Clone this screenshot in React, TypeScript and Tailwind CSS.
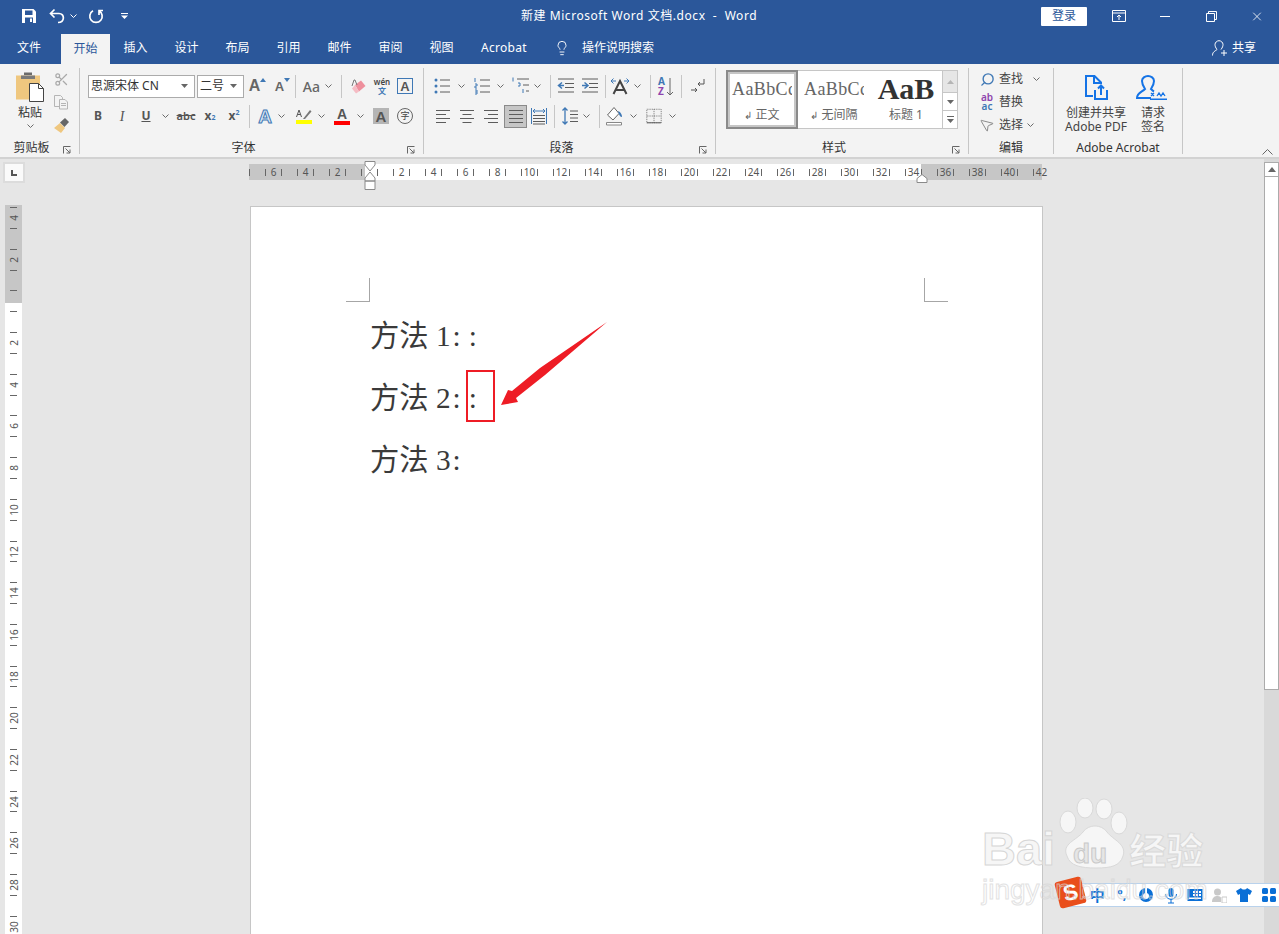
import type { ReactNode } from "react";
import { Lightbulb, MousePointer2, Scissors, Search, X } from "lucide-react";

const BLUE = "#3f78b5";
const GRAY = "#5c5c5c";

const TABS = ["插入", "设计", "布局", "引用", "邮件", "审阅", "视图"];
const H_CELLS = Array.from({ length: 50 }, (_, i) => (i % 2 === 1 && i !== 7 ? Math.abs(i - 7) : null));
const V_CELLS = Array.from({ length: 35 }, (_, i) => (i % 2 === 0 && i !== 4 ? Math.abs(i - 4) : null));

function Chevron({ color = "#6a6a6a" }: { color?: string }) {
  return (
    <svg width="7" height="4" viewBox="0 0 7 4" fill="none">
      <path d="M0.5 0.5 3.5 3.5 6.5 0.5" stroke={color} />
    </svg>
  );
}

function Cell({ className, children }: { className: string; children?: ReactNode }) {
  return <div className={`flex shrink-0 items-center justify-center ${className}`}>{children}</div>;
}

function Sep({ className }: { className?: string }) {
  return <div className={`h-[23px] w-px shrink-0 bg-[#c6c6c6] ${className ?? ""}`} />;
}

function Launcher() {
  return (
    <svg width="8" height="8" viewBox="0 0 8 8" fill="none" stroke="#666">
      <path d="M0.5 7.5V0.5H7.5M2.5 2.5 7 7M7 3.5V7H3.5" />
    </svg>
  );
}

function Group({ className, label, launcher, children }: { className: string; label: string; launcher?: boolean; children: ReactNode }) {
  return (
    <section className={`flex h-[86px] shrink-0 flex-col border-r border-[#c6c6c6] ${className}`}>
      <div className="h-[72px]">{children}</div>
      <div className="flex h-[14px] items-center text-[12px] text-[#333]">
        <span className="mt-[2px] flex-1 text-center leading-[14px]">{label}</span>
        {launcher && (
          <span className="mt-[5px] flex w-[16px] justify-start">
            <Launcher />
          </span>
        )}
      </div>
    </section>
  );
}

function Lines({ ys, x1 = 2, x2 = 18, color = GRAY }: { ys: number[]; x1?: number; x2?: number; color?: string }) {
  return (
    <>
      {ys.map((y, i) => (
        <path key={i} d={`M${x1} ${y}H${x2}`} stroke={color} />
      ))}
    </>
  );
}

function Icon({ children, size = 20 }: { children: ReactNode; size?: number }) {
  return (
    <svg width={size} height={size} viewBox="0 0 20 20" fill="none">
      {children}
    </svg>
  );
}

function AlignIcon({ kind }: { kind: "left" | "center" | "right" | "full" }) {
  const short = {
    left: "M3 8.5H13M3 16.5H13",
    center: "M5.5 8.5H14.5M5.5 16.5H14.5",
    right: "M7 8.5H17M7 16.500H17",
    full: "M3 8.5H17M3 16.5H17",
  }[kind];
  return (
    <Icon>
      <path d="M3 4.5H17M3 12.5H17" stroke={GRAY} />
      <path d={short} stroke={GRAY} />
    </Icon>
  );
}

function LetterA({ size = 17, color = "#555" }: { size?: number; color?: string }) {
  return (
    <span className="font-['Liberation_Sans',sans-serif] font-bold leading-none" style={{ fontSize: size, color }}>
      A
    </span>
  );
}

function ClipboardGroup() {
  return (
    <Group className="w-[80px]" label="剪贴板" launcher>
      <div className="flex">
        <div className="ml-[10px] flex w-[40px] flex-col items-center pt-[4px]">
          <svg width="30" height="30" viewBox="0 0 30 30">
            <path d="M1 3.5h24v24H1z" fill="#efc77f" />
            <path d="M9 3h8V0.5h-8z" fill="#6b6b6b" />
            <path d="M6 3.5h14V7H6z" fill="#7a7a7a" />
            <path d="M14.5 11.5h9l5 5v13h-14z" fill="#fff" stroke="#444" />
            <path d="M23.5 11.5v5h5" fill="none" stroke="#444" />
          </svg>
          <span className="mt-[4px] h-[14px] text-[12px] leading-[14px] text-[#333]">粘贴</span>
          <span className="mt-[4px] flex">
            <Chevron />
          </span>
        </div>
        <div className="flex w-[22px] flex-col gap-[3px] pt-px">
          <Cell className="h-[20px]">
            <Scissors size={15} color="#a9a9a9" />
          </Cell>
          <Cell className="h-[20px]">
            <svg width="16" height="16" viewBox="0 0 16 16" fill="#f3f3f3" stroke="#b5b5b5">
              <path d="M1.5 1.5h6l2 2v9h-8z" />
              <path d="M6.5 5.5h5.5l2.5 2.5v7h-8z" />
              <path d="M8 9.5h5M8 11.5h5" />
            </svg>
          </Cell>
          <Cell className="h-[20px]">
            <svg width="17" height="17" viewBox="0 0 17 17">
              <path d="M1 11 7 6l5 5-4 5z" fill="#efc77f" />
              <path d="M7 5.5 12 1l4 4-4.5 5z" fill="#666" />
            </svg>
          </Cell>
        </div>
      </div>
    </Group>
  );
}

function FontGroup() {
  return (
    <Group className="w-[344px]" label="字体" launcher>
      <div className="box-content flex h-[24px] items-center pl-[8px] pt-[6px]">
        <div className="flex h-[23px] w-[107px] shrink-0 items-center justify-between border border-[#ababab] bg-white pl-[2px] pr-[6px] text-[12px] text-[#333]">
          <span>思源宋体 CN</span>
          <svg width="7" height="4" viewBox="0 0 7 4">
            <path d="M0 0h7L3.500 4z" fill="#666" />
          </svg>
        </div>
        <div className="ml-[2px] flex h-[23px] w-[47px] shrink-0 items-center justify-between border border-[#ababab] bg-white pl-[2px] pr-[6px] text-[12px] text-[#333]">
          <span>二号</span>
          <svg width="7" height="4" viewBox="0 0 7 4">
            <path d="M0 0h7L3.500 4z" fill="#666" />
          </svg>
        </div>
        <Cell className="ml-[1px] w-[25px]">
          <LetterA size={16} color="#666" />
          <svg className="-mt-[12px]" width="6" height="4" viewBox="0 0 6 4">
            <path d="M0 4 3 0l3 4z" fill={BLUE} />
          </svg>
        </Cell>
        <Cell className="w-[25px]">
          <LetterA size={13} color="#666" />
          <svg className="-mt-[12px]" width="6" height="4" viewBox="0 0 6 4">
            <path d="M0 0h6L3 4z" fill={BLUE} />
          </svg>
        </Cell>
        <Sep />
        <Cell className="w-[24px] justify-end text-[14px] font-medium text-[#666]">Aa</Cell>
        <Cell className="w-[16px]">
          <Chevron />
        </Cell>
        <Sep className="ml-[5px]" />
        <Cell className="w-[32px]">
          <svg width="16" height="17" viewBox="0 0 16 17">
            <path d="M5 7 11 2.500 15.500 8 9 13.500z" fill="#ee8f9c" />
            <path d="M2 10.500 5 7l4 6.500-3 2z" fill="#f5bcc4" />
            <path d="M2 8 4 2h1l2 5" fill="none" stroke="#777" />
          </svg>
        </Cell>
        <Cell className="w-[16px] flex-col text-[8px] leading-[9px] text-[#444]">
          <span className="font-semibold">wén</span>
          <span className="font-bold text-[#3f78b5]">文</span>
        </Cell>
        <Cell className="ml-[3px] w-[24px]">
          <span className="flex h-[16px] w-[16px] items-center justify-center border border-[#3f78b5]">
            <LetterA size={13} />
          </span>
        </Cell>
      </div>
      <div className="mt-[6px] flex h-[24px] items-center pl-[8px] text-[#555]">
        <Cell className="w-[20px] text-[12px] font-bold">B</Cell>
        <Cell className="w-[28px] font-['Liberation_Serif',serif] text-[14px] italic">I</Cell>
        <Cell className="w-[20px] text-[12px] font-bold underline">U</Cell>
        <Cell className="w-[18px]">
          <Chevron />
        </Cell>
        <Cell className="w-[24px] text-[11px] font-semibold line-through">abc</Cell>
        <Cell className="w-[24px] text-[12px] font-bold">
          x<sub className="text-[7px] text-[#3f78b5]">2</sub>
        </Cell>
        <Cell className="w-[24px] text-[12px] font-bold">
          x<sup className="text-[7px] text-[#3f78b5]">2</sup>
        </Cell>
        <Sep className="ml-[3px]" />
        <Cell className="ml-[3px] w-[24px]">
          <span className="font-['Liberation_Sans',sans-serif] text-[19px] font-bold leading-none text-[#dbe7f4] [-webkit-text-stroke:1px_#3f78b5]">A</span>
        </Cell>
        <Cell className="w-[8px]">
          <Chevron />
        </Cell>
        <Cell className="ml-[7px] w-[24px] flex-col">
          <svg width="16" height="12" viewBox="0 0 16 12">
            <path d="M7 11 14 2l1.500 1.500L9 11z" fill="#777" />
            <path d="M0.500 9 3 2l2.500 7M1.500 6.500h3" fill="none" stroke="#555" />
          </svg>
          <span className="h-[4px] w-[16px] bg-[#ffff00]" />
        </Cell>
        <Cell className="w-[10px]">
          <Chevron />
        </Cell>
        <Cell className="ml-[4px] w-[24px] flex-col">
          <LetterA size={14} />
          <span className="h-[4px] w-[16px] bg-[#ff0000]" />
        </Cell>
        <Cell className="w-[12px]">
          <Chevron />
        </Cell>
        <Cell className="ml-[3px] w-[24px]">
          <span className="flex h-[16px] w-[16px] items-center justify-center bg-[#b5b5b5]">
            <LetterA size={15} />
          </span>
        </Cell>
        <Cell className="w-[24px]">
          <span className="flex h-[16px] w-[16px] items-center justify-center rounded-full border border-[#666] text-[9px] text-[#444]">字</span>
        </Cell>
      </div>
    </Group>
  );
}

function ParagraphGroup() {
  return (
    <Group className="w-[292px]" label="段落" launcher>
      <div className="box-content flex h-[24px] items-center pt-[6px]">
        <Cell className="ml-[6px] w-[24px]">
          <Icon>
            <circle cx="4" cy="4" r="1.500" fill={BLUE} />
            <circle cx="4" cy="10" r="1.500" fill={BLUE} />
            <circle cx="4" cy="16" r="1.500" fill={BLUE} />
            <Lines ys={[4, 10, 16]} x1={8} />
          </Icon>
        </Cell>
        <Cell className="w-[14px]">
          <Chevron />
        </Cell>
        <Cell className="ml-[2px] w-[24px]">
          <Icon>
            <path d="M3 2v4M3 8h2v2H3v2h2M3 14h2v4H3M3 16h2" stroke={BLUE} />
            <Lines ys={[4, 10, 16]} x1={8} />
          </Icon>
        </Cell>
        <Cell className="w-[12px]">
          <Chevron />
        </Cell>
        <Cell className="ml-[3px] w-[24px]">
          <Icon>
            <path d="M2 1.500v4M7 7h2v3H7M12 13v4" stroke={BLUE} />
            <Lines ys={[3]} x1={6} />
            <Lines ys={[9]} x1={12} />
            <Lines ys={[15]} x1={15} />
          </Icon>
        </Cell>
        <Cell className="w-[8px]">
          <Chevron />
        </Cell>
        <Sep className="ml-[9px]" />
        <Cell className="ml-[3px] w-[24px]">
          <Icon>
            <Lines ys={[3, 16]} x1={2} />
            <Lines ys={[7.500, 11.500]} x1={9} />
            <path d="M8 9.500H3M6 6.500 2.500 9.500 6 12.500" stroke={BLUE} strokeWidth="1.500" />
          </Icon>
        </Cell>
        <Cell className="w-[24px]">
          <Icon>
            <Lines ys={[3, 16]} x1={2} />
            <Lines ys={[7.500, 11.500]} x1={9} />
            <path d="M2 9.500H7M4.500 6.500 8 9.500 4.500 12.500" stroke={BLUE} strokeWidth="1.500" />
          </Icon>
        </Cell>
        <Sep className="ml-[3px]" />
        <Cell className="ml-[2px] w-[24px]">
          <Icon>
            <path d="M3.500 18 10 5l6.500 13M6 14h8" stroke="#444" strokeWidth="2" />
            <path d="M1 5h5M3.500 2.500 1 5l2.500 2.500M14 5h5M16.500 2.500 19 5l-2.500 2.500" stroke={BLUE} />
          </Icon>
        </Cell>
        <Cell className="w-[10px]">
          <Chevron />
        </Cell>
        <Sep className="ml-[8px]" />
        <Cell className="ml-[3px] w-[24px] gap-[1px]">
          <span className="flex flex-col text-[10px] font-bold leading-[10px]">
            <span className="text-[#3f78b5]">A</span>
            <span className="text-[#8e44ad]">Z</span>
          </span>
          <svg width="8" height="19" viewBox="0 0 8 19" fill="none" stroke="#666">
            <path d="M4 1v17M1 15l3 3 3-3" />
          </svg>
        </Cell>
        <Sep className="ml-[3px]" />
        <Cell className="ml-[3px] w-[24px]">
          <Icon>
            <path d="M17 3v5h-6M13 6l-2 2 2 2" stroke="#555" />
            <path d="M4 14h6M8 12l2 2-2 2" stroke="#555" />
          </Icon>
        </Cell>
      </div>
      <div className="mt-[6px] flex h-[24px] items-center">
        <Cell className="ml-[7px] w-[24px]">
          <AlignIcon kind="left" />
        </Cell>
        <Cell className="w-[24px]">
          <AlignIcon kind="center" />
        </Cell>
        <Cell className="w-[24px]">
          <AlignIcon kind="right" />
        </Cell>
        <Cell className="ml-[1px] h-[23px] w-[23px] border border-[#8a8a8a] bg-[#c6c6c6]">
          <AlignIcon kind="full" />
        </Cell>
        <Cell className="w-[24px]">
          <Icon>
            <path d="M2.500 2v16M17.500 2v16" stroke={BLUE} />
            <path d="M4 5h12M6 3l-2 2 2 2M14 3l2 2-2 2" stroke={BLUE} />
            <Lines ys={[9.500, 12.500, 15.500, 18]} x1={4} x2={16} />
          </Icon>
        </Cell>
        <Sep className="ml-[3px]" />
        <Cell className="ml-[3px] w-[24px]">
          <Icon>
            <path d="M5 2v16M2.500 4.500 5 2l2.500 2.500M2.500 15.500 5 18l2.500-2.500" stroke={BLUE} strokeWidth="1.300" />
            <Lines ys={[5, 8.500, 12, 15.500]} x1={10} />
          </Icon>
        </Cell>
        <Cell className="w-[8px]">
          <Chevron />
        </Cell>
        <Sep className="ml-[9px]" />
        <Cell className="ml-[3px] w-[24px]">
          <Icon>
            <path d="M9 1.500 2.500 9l5.500 5 6-6.500z" fill="#fff" stroke="#666" />
            <path d="M13 5c3 1 4 4 4 6-2 0-3-2-4-6z" fill={BLUE} />
            <path d="M1.500 16.500h15v2.500h-15z" fill="#fff" stroke="#888" />
          </Icon>
        </Cell>
        <Cell className="w-[12px]">
          <Chevron />
        </Cell>
        <Cell className="ml-[3px] w-[24px]">
          <Icon size={18}>
            <path d="M2 2.500h16v15H2zM10 2.500v15M2 10h16" stroke="#666" strokeDasharray="1 1" />
            <path d="M2 17.500h16" stroke="#555" />
          </Icon>
        </Cell>
        <Cell className="w-[12px]">
          <Chevron />
        </Cell>
      </div>
    </Group>
  );
}

function StyleCard({ className, sample, caption, arrow }: { className: string; sample: ReactNode; caption: string; arrow?: boolean }) {
  return (
    <div className={`flex h-full w-[72px] shrink-0 flex-col items-center overflow-hidden ${className}`}>
      <div className="flex h-[36px] w-full items-center justify-center overflow-hidden whitespace-nowrap font-['Liberation_Serif',serif]">{sample}</div>
      <div className="text-[12px] leading-[16px] text-[#666]">
        {arrow && <span className="mr-[3px] text-[10px]">↲</span>}
        {caption}
      </div>
    </div>
  );
}

function StylesGroup() {
  return (
    <Group className="w-[253px]" label="样式" launcher>
      <div className="pl-[10px] pt-[2px]">
        <div className="flex h-[59px] w-[232px] border border-[#c6c6c6] bg-white">
          <div className="-my-px -ml-px h-[59px] w-[72px] shrink-0 border-2 border-[#8a8a8a]">
            <div className="h-full border-2 border-[#c6c6c6]">
              <div className="-mx-[4px] -mt-[3px]">
                <StyleCard className="w-[68px]" arrow caption="正文" sample={<span className="w-[60px] overflow-hidden text-[18px] tracking-[0.4px] text-[#666]">AaBbCc</span>} />
              </div>
            </div>
          </div>
          <StyleCard className="" arrow caption="无间隔" sample={<span className="w-[60px] overflow-hidden text-[18px] tracking-[0.4px] text-[#666]">AaBbCc</span>} />
          <StyleCard className="" caption="标题 1" sample={<span className="text-[30px] font-bold leading-none text-[#333]">AaB</span>} />
          <div className="ml-auto flex w-[15px] flex-col border-l border-[#c6c6c6]">
            <Cell className="h-[21px] bg-[#e6e6e6]">
              <svg width="7" height="4" viewBox="0 0 7 4">
                <path d="M0 4h7L3.500 0z" fill="#b5b5b5" />
              </svg>
            </Cell>
            <Cell className="h-[19px] border-y border-[#c6c6c6]">
              <svg width="7" height="4" viewBox="0 0 7 4">
                <path d="M0 0h7L3.500 4z" fill="#666" />
              </svg>
            </Cell>
            <Cell className="flex-1 flex-col gap-[2px]">
              <span className="h-px w-[7px] bg-[#666]" />
              <svg width="7" height="4" viewBox="0 0 7 4">
                <path d="M0 0h7L3.500 4z" fill="#666" />
              </svg>
            </Cell>
          </div>
        </div>
      </div>
    </Group>
  );
}

function EditingGroup() {
  return (
    <Group className="w-[85px]" label="编辑">
      <div className="flex flex-col gap-[3px] pl-[9px] pt-px text-[12px] text-[#444]">
        <div className="flex h-[20px] items-center">
          <Cell className="w-[18px]">
            <Search size={15} color={BLUE} strokeWidth={2.2} className="-scale-x-100" />
          </Cell>
          <span className="ml-[3px]">查找</span>
          <span className="ml-[10px] flex">
            <Chevron />
          </span>
        </div>
        <div className="flex h-[20px] items-center">
          <Cell className="w-[18px] flex-col text-[10px] font-semibold leading-[9px]">
            <span className="text-[#8e44ad]">ab</span>
            <span className="text-[#3f78b5]">ac</span>
          </Cell>
          <span className="ml-[3px]">替换</span>
        </div>
        <div className="flex h-[20px] items-center">
          <Cell className="w-[18px]">
            <MousePointer2 size={16} color="#777" strokeWidth={1.2} className="-rotate-[8deg]" />
          </Cell>
          <span className="ml-[3px]">选择</span>
          <span className="ml-[4px] flex">
            <Chevron />
          </span>
        </div>
      </div>
    </Group>
  );
}

function AcrobatGroup() {
  return (
    <Group className="w-[129px]" label="Adobe Acrobat">
      <div className="flex text-[12px] leading-[14px] text-[#444]">
        <div className="flex w-[84px] flex-col items-center pt-[7px] text-center">
          <svg width="24" height="25" viewBox="0 0 24 25" fill="none" stroke="#1473e6" strokeWidth="2">
            <path d="M9 21H2V1h8.500L17 7.500V9M10 1v7h7" />
            <path d="M11 15v9h12v-9M17 20v-9M14 13.500l3-3 3 3" />
          </svg>
          <span className="mt-[6px]">创建并共享</span>
          <span>Adobe PDF</span>
        </div>
        <div className="flex w-[30px] flex-col items-center pt-[7px] text-center">
          <svg className="-ml-[2px]" width="32" height="25" viewBox="0 0 32 25" fill="none" stroke="#1473e6" strokeWidth="2">
            <path d="M15 23H1c0-5 5-6 8-9-2-3-3-5-3-8 0-3 3-5 6-5s6 2 6 5c0 3-1 5-3 8 1 1 2 2 3 2.500" />
            <path d="M14 24.500H31" />
            <path d="M15 18l3 3M18 18l-3 3M21 21l2-3 2 3 2-3 2 3" strokeWidth="1.300" />
          </svg>
          <span className="mt-[6px]">请求</span>
          <span>签名</span>
        </div>
      </div>
    </Group>
  );
}

function TitleBar() {
  return (
    <header className="flex h-[32px] items-center text-white">
      <div className="flex h-full w-[521px] shrink-0 items-center pl-[21px]">
        <svg width="16" height="16" viewBox="0 0 16 16">
          <path d="M1 1h11.500L15 3.500V15H1z" fill="#fff" />
          <path d="M4 2.500h7.500v4.500H4z" fill="#2b579a" />
          <path d="M4 9.500h8V15H4z" fill="#2b579a" />
          <path d="M9 10.500h2V14H9z" fill="#fff" />
        </svg>
        <svg className="ml-[12px]" width="16" height="16" viewBox="0 0 16 16" fill="none" stroke="#fff" strokeWidth="1.700">
          <path d="M5.500 1.500 1.500 5.500l4 4M1.500 5.500H10c6 0 6 9-1 9" />
        </svg>
        <span className="ml-[5px] flex">
          <Chevron color="#fff" />
        </span>
        <svg className="ml-[11px]" width="16" height="16" viewBox="0 0 16 16" fill="none" stroke="#fff" strokeWidth="1.700">
          <path d="M5 2.800A6.200 6.200 0 1 0 11 2.800M11 7V2.500h4" />
        </svg>
        <svg className="ml-[17px]" width="7" height="6" viewBox="0 0 7 6" fill="#fff">
          <path d="M0 0h7v1H0zM0 2.500h7L3.500 6z" />
        </svg>
      </div>
      <div className="-mt-px whitespace-nowrap text-[12px] tracking-[0.55px]">新建 Microsoft Word 文档.docx&nbsp; -&nbsp; Word</div>
      <div className="ml-auto flex h-full items-center">
        <div className="flex h-[19px] w-[46px] items-center justify-center rounded-[1px] bg-white text-[12px] text-[#2b579a]">登录</div>
        <Cell className="ml-[25px] w-[14px]">
          <svg width="14" height="12" viewBox="0 0 14 12" fill="none" stroke="#fff">
            <path d="M0.500 0.500h13v11H0.500zM0.500 3h13M7 10V5M5 7l2-2 2 2" />
          </svg>
        </Cell>
        <Cell className="ml-[32px] w-[14px]">
          <span className="h-px w-[10px] bg-white" />
        </Cell>
        <Cell className="ml-[32px] w-[14px]">
          <svg width="11" height="11" viewBox="0 0 11 11" fill="none" stroke="#fff">
            <path d="M0.500 2.500h8v8h-8zM2.500 2.500v-2h8v8h-2" />
          </svg>
        </Cell>
        <Cell className="ml-[32px] mr-[15px] w-[14px]">
          <X size={17} color="#fff" strokeWidth={1.4} />
        </Cell>
      </div>
    </header>
  );
}

function TabRow() {
  return (
    <nav className="flex h-[32px] items-stretch text-[12px] text-white">
      <Cell className="ml-[4px] w-[50px]">文件</Cell>
      <Cell className="ml-[7px] mt-[2px] w-[49px] bg-[#f3f3f3] text-[#2b579a]">开始</Cell>
      {TABS.map((tab) => (
        <Cell key={tab} className="w-[51px]">
          {tab}
        </Cell>
      ))}
      <Cell className="w-[74px] text-[12px] tracking-[0.3px]">Acrobat</Cell>
      <Cell className="ml-[13px] w-[16px]">
        <Lightbulb size={18} color="#fff" strokeWidth={1.4} />
      </Cell>
      <Cell className="ml-[12px]">操作说明搜索</Cell>
      <div className="ml-auto flex items-center pr-[23px]">
        <svg width="16" height="16" viewBox="0 0 16 16" fill="none" stroke="#fff">
          <path d="M0.500 15.500c0-4 3-4.500 4.500-6-1.500-2-2-3.500-2-5 0-2 2-3.800 4-3.800s4 1.800 4 3.800c0 1.500-.5 3-2 5M12 10v6M9 13h6" />
        </svg>
        <span className="ml-[4px]">共享</span>
      </div>
    </nav>
  );
}

function HRuler() {
  return (
    <div className="relative mt-[5px] flex h-[16px] w-[793px] bg-[linear-gradient(90deg,#c6c6c6_116px,#fff_116px,#fff_672px,#c6c6c6_672px)] text-[10px] text-[#555]">
      {H_CELLS.map((label, i) => (
        <div key={i} className="flex w-[16px] shrink-0 items-center">
          <span className="h-[7px] w-px shrink-0 bg-[#666]" />
          <span className="flex-1 text-center leading-none">{label}</span>
        </div>
      ))}
      <svg className="absolute left-[115px] -top-[3px]" width="12" height="29" viewBox="0 0 12 29" fill="#fff" stroke="#8a8a8a">
        <path d="M1 .5h10V4L6 10 1 4zM6 11l5 6v3H1v-3zM1 20h10v8.500H1z" />
      </svg>
      <svg className="absolute left-[667px] top-[10px]" width="12" height="9" viewBox="0 0 12 9" fill="#fff" stroke="#8a8a8a">
        <path d="M1 8.500V4.500L6 .5l5 4v4z" />
      </svg>
    </div>
  );
}

function VRuler() {
  return (
    <div className="ml-[5px] h-[729px] w-[17px] overflow-hidden bg-[linear-gradient(#c6c6c6_98px,#fff_98px)] pt-[2px] text-[10px] text-[#555]">
      {V_CELLS.map((label, i) => (
        <div key={i} className="flex h-[20.85px] flex-col items-center">
          <span className="h-px w-[7px] shrink-0 bg-[#666]" />
          <span className="flex flex-1 -rotate-90 items-center leading-none">{label}</span>
        </div>
      ))}
    </div>
  );
}

function Watermark() {
  return (
    <div className="pointer-events-none absolute left-[982px] top-[798px] h-[112px] w-[240px] text-[#f6f6f6]">
      <div className="flex items-start whitespace-nowrap">
        <span className="mt-[27px] shrink-0 font-['Liberation_Sans',sans-serif] text-[47px] font-bold leading-[48px] [-webkit-text-stroke:1px_#d6d6d6]">Bai</span>
        <svg className="ml-[4px] shrink-0" width="70" height="72" viewBox="0 0 70 72" fill="#f6f6f6" stroke="#d9d9d9">
          <ellipse cx="9" cy="24" rx="8" ry="11" />
          <ellipse cx="26" cy="10" rx="8" ry="10" />
          <ellipse cx="45" cy="11" rx="8" ry="10" />
          <ellipse cx="60" cy="25" rx="8" ry="11" />
          <path d="M8 58c-6-12 10-16 16-24 6-8 18-8 24 0 6 8 20 12 16 24-3 10-12 12-27 12-15 0-26-2-29-12z" />
        </svg>
        <span className="mt-[29px] shrink-0 font-['Noto_Sans_CJK_SC',sans-serif] text-[37px] font-bold leading-[44px] [-webkit-text-stroke:1px_#d9d9d9]">经验</span>
      </div>
      <span className="absolute left-[91px] top-[42px] font-['Liberation_Sans',sans-serif] text-[28px] font-bold leading-none text-[#e6e6e6] [-webkit-text-stroke:1px_#c9c9c9]">du</span>
      <span className="absolute left-0 top-[76px] whitespace-nowrap font-['Liberation_Sans',sans-serif] text-[28px] leading-[32px] text-transparent opacity-70 [-webkit-text-stroke:1px_#d6d6d6]">jingyan.baidu.com</span>
    </div>
  );
}

function ImeBar() {
  const blue = "#0a6fd6";
  return (
    <>
      <div className="absolute left-[1063px] top-[883px] flex h-[24px] w-[216px] items-center overflow-hidden border-y border-[#b9d2ec] bg-white pl-[22px]">
        <Cell className="w-[24.500px] text-[15px] font-bold text-[#0a6fd6]">中</Cell>
        <Cell className="w-[24.500px] text-[13px] font-bold text-[#0a6fd6]">°,</Cell>
        <Cell className="w-[24.500px]">
          <svg width="16" height="16" viewBox="0 0 16 16">
            <circle cx="8" cy="8" r="7" fill={blue} />
            <circle cx="8" cy="9" r="3" fill="#fff" />
            <path d="M7 1h2v6H7z" fill="#fff" />
          </svg>
        </Cell>
        <Cell className="w-[24.500px]">
          <svg width="14" height="17" viewBox="0 0 14 17" fill="none">
            <rect x="4.500" y="1" width="5" height="9" rx="2.500" fill={blue} />
            <path d="M1.500 7c0 7 11 7 11 0M7 12v4M4 16h6" stroke={blue} />
          </svg>
        </Cell>
        <Cell className="w-[24.500px]">
          <svg width="16" height="14" viewBox="0 0 16 14">
            <path d="M0.500 1h15v12H0.500z" fill={blue} />
            <path d="M6 3h2v2H6zM9 3h2v2H9zM12 3h2v2h-2zM6 6h2v2H6zM9 6h2v2H9zM12 6h2v2h-2zM2 9.500h12v1.500H2z" fill="#fff" />
          </svg>
        </Cell>
        <Cell className="w-[24.500px]">
          <svg width="15" height="15" viewBox="0 0 15 15" fill="#c9c9c9">
            <circle cx="5.500" cy="4" r="3.500" />
            <path d="M0 14c0-5 3-6 5.500-6S9 9 9 10v4z" />
            <path d="M10 9h5v6h-5z" fill="#fff" stroke="#c9c9c9" />
          </svg>
        </Cell>
        <Cell className="w-[24.500px]">
          <svg width="16" height="14" viewBox="0 0 16 14">
            <path d="M5 0 0 3l2 4 2-1v8h8V6l2 1 2-4-5-3c-1 2-5 2-6 0z" fill={blue} />
          </svg>
        </Cell>
        <Cell className="w-[24.500px]">
          <svg width="14" height="14" viewBox="0 0 14 14" fill={blue}>
            <rect width="6" height="6" rx="1.500" />
            <rect x="8" width="6" height="6" rx="1.500" />
            <rect y="8" width="6" height="6" rx="1.500" />
            <rect x="8" y="8" width="6" height="6" rx="1.500" />
          </svg>
        </Cell>
      </div>
      <div className="absolute left-[1057px] top-[879px] flex h-[27px] w-[27px] -rotate-[14deg] items-center justify-center rounded-[3px] bg-[#e94e1b] font-['Liberation_Sans',sans-serif] text-[22px] font-bold leading-none text-white">
        S
      </div>
    </>
  );
}

export default function App() {
  return (
    <div className="relative h-[934px] w-[1279px] overflow-hidden bg-[#e6e6e6] font-['Noto_Sans','Noto_Sans_CJK_SC',sans-serif]">
      <div className="bg-[#2b579a]">
        <TitleBar />
        <TabRow />
      </div>

      <div className="flex h-[95px] items-start border-b-2 border-[#d2d2d2] bg-[#f3f3f3] pt-[4px]">
        <ClipboardGroup />
        <FontGroup />
        <ParagraphGroup />
        <StylesGroup />
        <EditingGroup />
        <AcrobatGroup />
        <div className="flex h-[90px] flex-1 items-end justify-end pb-[3px] pr-[6px]">
          <svg width="11" height="6" viewBox="0 0 11 6" fill="none" stroke="#666">
            <path d="M0.500 5.500 5.500 0.500l5 5" />
          </svg>
        </div>
      </div>

      <main className="flex h-[775px]">
        <div className="w-[249px] shrink-0">
          <div className="ml-[3px] mt-[3px] flex h-[21px] w-[22px] items-center justify-center border-2 border-[#dcdcdc] bg-[#fafafa]">
            <span className="h-[6px] w-[6px] border-b-2 border-l-2 border-[#555]" />
          </div>
          <div className="h-[22px]" />
          <VRuler />
        </div>

        <div className="w-[794px] shrink-0">
          <HRuler />
          <article className="ml-px mt-[26px] h-[760px] w-[793px] border border-[#c6c6c6] bg-white pt-[71px]">
            <div className="flex justify-between pl-[95px] pr-[94px]">
              <span className="h-[24px] w-[24px] border-b border-r border-[#a6a6a6]" />
              <span className="h-[24px] w-[24px] border-b border-l border-[#a6a6a6]" />
            </div>
            <div className="mt-[3px] pl-[119px] font-['Liberation_Serif','Noto_Sans_CJK_SC',serif] text-[29.300px] leading-[62px] text-[#3a3a3a]">
              <p>
                方法 1<span className="ml-[2px]">:</span>
                <span className="ml-[8px]">:</span>
              </p>
              <p>
                方法 2<span className="ml-[2px]">:</span>
                <span className="ml-[8px]">:</span>
              </p>
              <p>
                方法 3<span className="ml-[2px]">:</span>
              </p>
            </div>
          </article>
        </div>

        <div className="flex-1" />

        <aside className="w-[15px] shrink-0 bg-[#d9d9d9] pt-[3px]">
          <Cell className="h-[15px] border border-[#ababab] bg-white">
            <svg width="8" height="5" viewBox="0 0 8 5">
              <path d="M0 5h8L4 0z" fill="#666" />
            </svg>
          </Cell>
          <div className="h-[513px] border-x border-b border-[#ababab] bg-white" />
        </aside>
      </main>

      <div className="absolute left-[466px] top-[370px] h-[52px] w-[29px] border-2 border-[#ee1c25]" />
      <svg className="absolute left-[495px] top-[315px]" width="120" height="100" viewBox="0 0 120 100">
        <path d="M112 7 45 53 17 76 13 75 6 90 23 87 21 83 50 60z" fill="#ee1c25" />
      </svg>

      <ImeBar />
      <Watermark />
    </div>
  );
}
